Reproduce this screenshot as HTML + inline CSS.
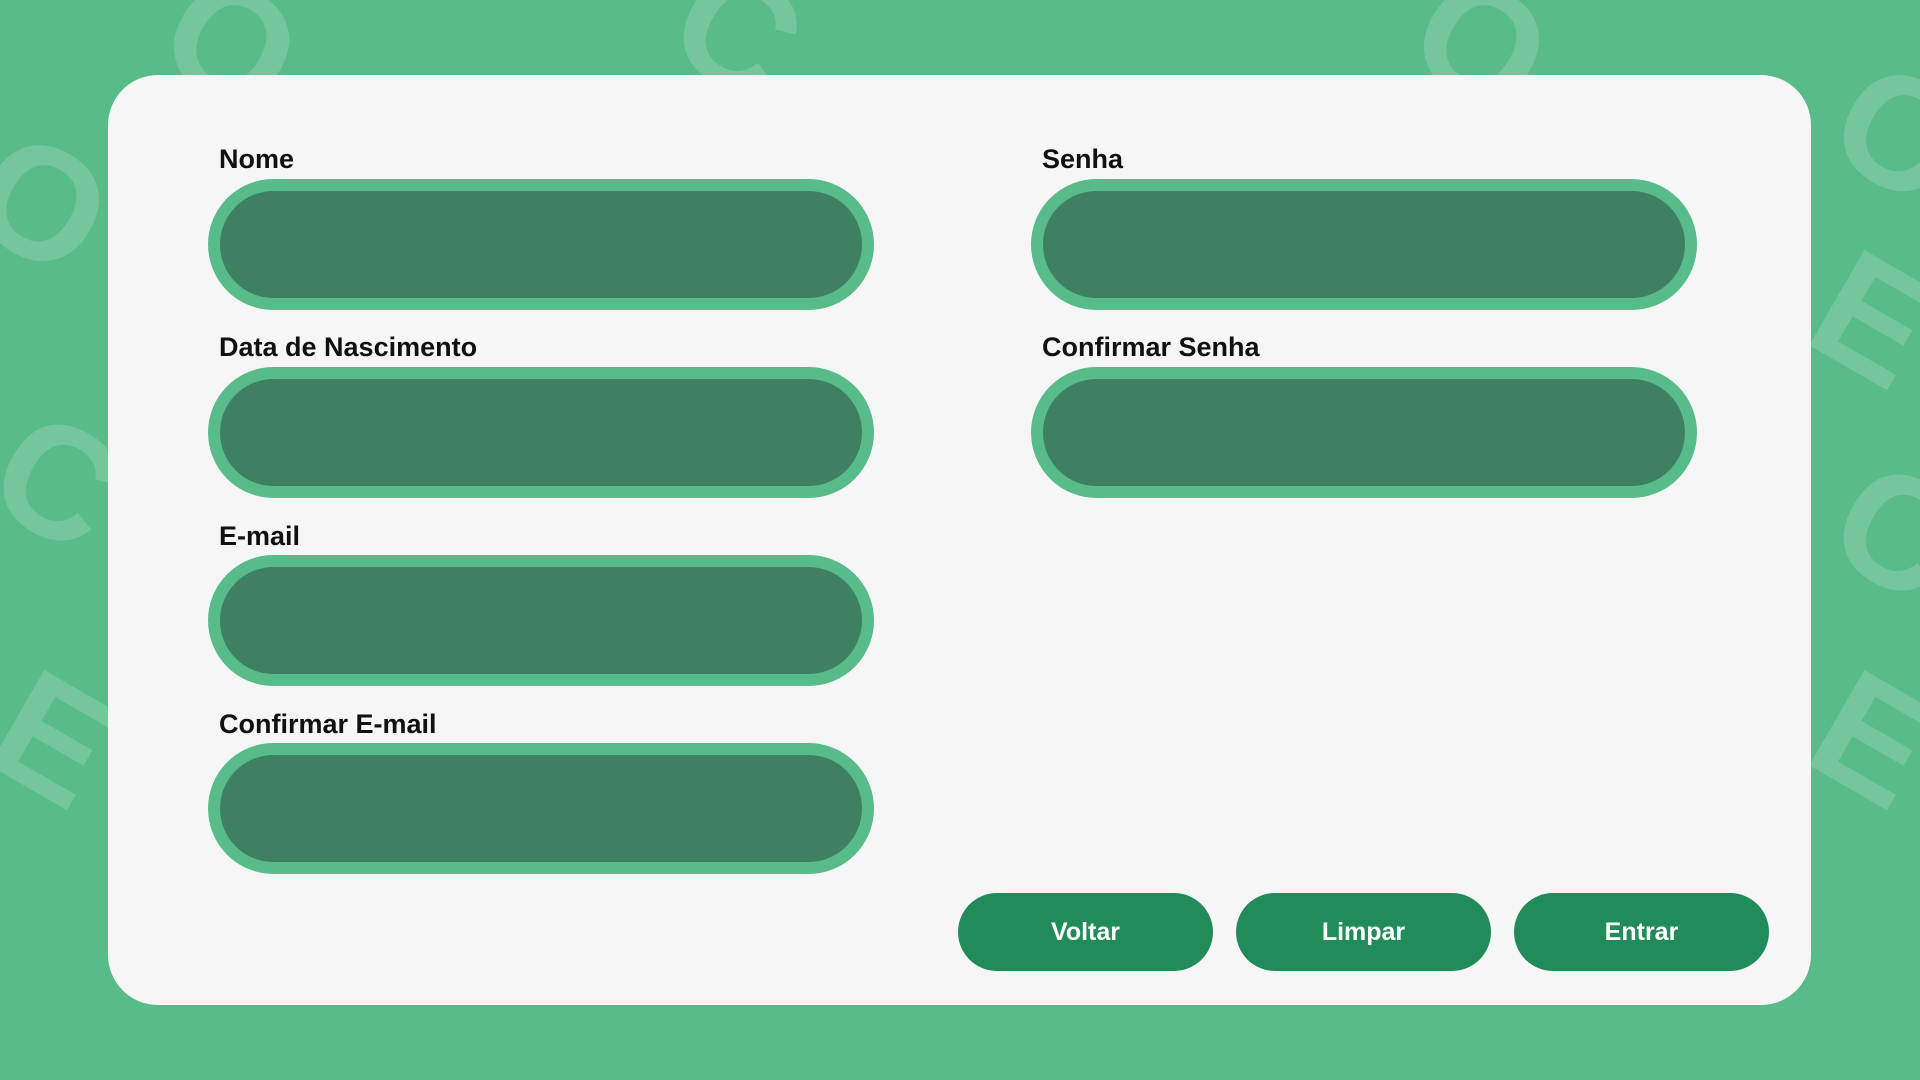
<!DOCTYPE html>
<html><head><meta charset="utf-8"><style>
html,body{margin:0;padding:0;width:1920px;height:1080px;overflow:hidden;background:#57bb8a;font-family:"Liberation Sans",sans-serif;}
#wrap{position:relative;width:1920px;height:1080px;overflow:hidden;background:#57bb8a;}
svg.bgs{position:absolute;left:0;top:0;}
.card{position:absolute;left:108px;top:75px;width:1703px;height:930px;background:#f6f6f6;border-radius:50px;}
.lbl{position:absolute;font-weight:bold;font-size:27px;color:#111;}
.in{position:absolute;width:642px;height:107px;border:12px solid #57bb8a;background:#3f8063;border-radius:66px;}
.btn{position:absolute;top:893px;width:255px;height:78px;background:#218c5a;border-radius:39px;color:#fff;font-weight:bold;font-size:25px;text-align:center;line-height:78px;}
</style></head><body><div id="wrap">
<svg class="bgs" width="1920" height="1080" viewBox="0 0 1920 1080" style="overflow:hidden">
<g fill="#7dcaa2" font-family="Liberation Sans, sans-serif" font-weight="bold" font-size="160" opacity="0.8">
<text transform="translate(150,60) rotate(30)">O</text>
<text transform="translate(660,50) rotate(30)">C</text>
<text transform="translate(1400,60) rotate(30)">O</text>
<text transform="translate(1820,150) rotate(30)">O</text>
<text transform="translate(-40,220) rotate(30)">O</text>
<text transform="translate(1800,340) rotate(30)">E</text>
<text transform="translate(1820,550) rotate(30)">C</text>
<text transform="translate(-20,500) rotate(30)">C</text>
<text transform="translate(-20,760) rotate(30)">E</text>
<text transform="translate(1800,760) rotate(30)">E</text>
</g></svg>
<div class="card"></div>
<div class="lbl" style="left:219px;top:144px">Nome</div>
<div class="in" style="left:208px;top:179px"></div>
<div class="lbl" style="left:219px;top:332px">Data de Nascimento</div>
<div class="in" style="left:208px;top:367px"></div>
<div class="lbl" style="left:219px;top:521px">E-mail</div>
<div class="in" style="left:208px;top:555px"></div>
<div class="lbl" style="left:219px;top:709px">Confirmar E-mail</div>
<div class="in" style="left:208px;top:743px"></div>
<div class="lbl" style="left:1042px;top:144px">Senha</div>
<div class="in" style="left:1031px;top:179px"></div>
<div class="lbl" style="left:1042px;top:332px">Confirmar Senha</div>
<div class="in" style="left:1031px;top:367px"></div>
<div class="btn" style="left:958px">Voltar</div>
<div class="btn" style="left:1236px">Limpar</div>
<div class="btn" style="left:1514px">Entrar</div>
</div></body></html>
